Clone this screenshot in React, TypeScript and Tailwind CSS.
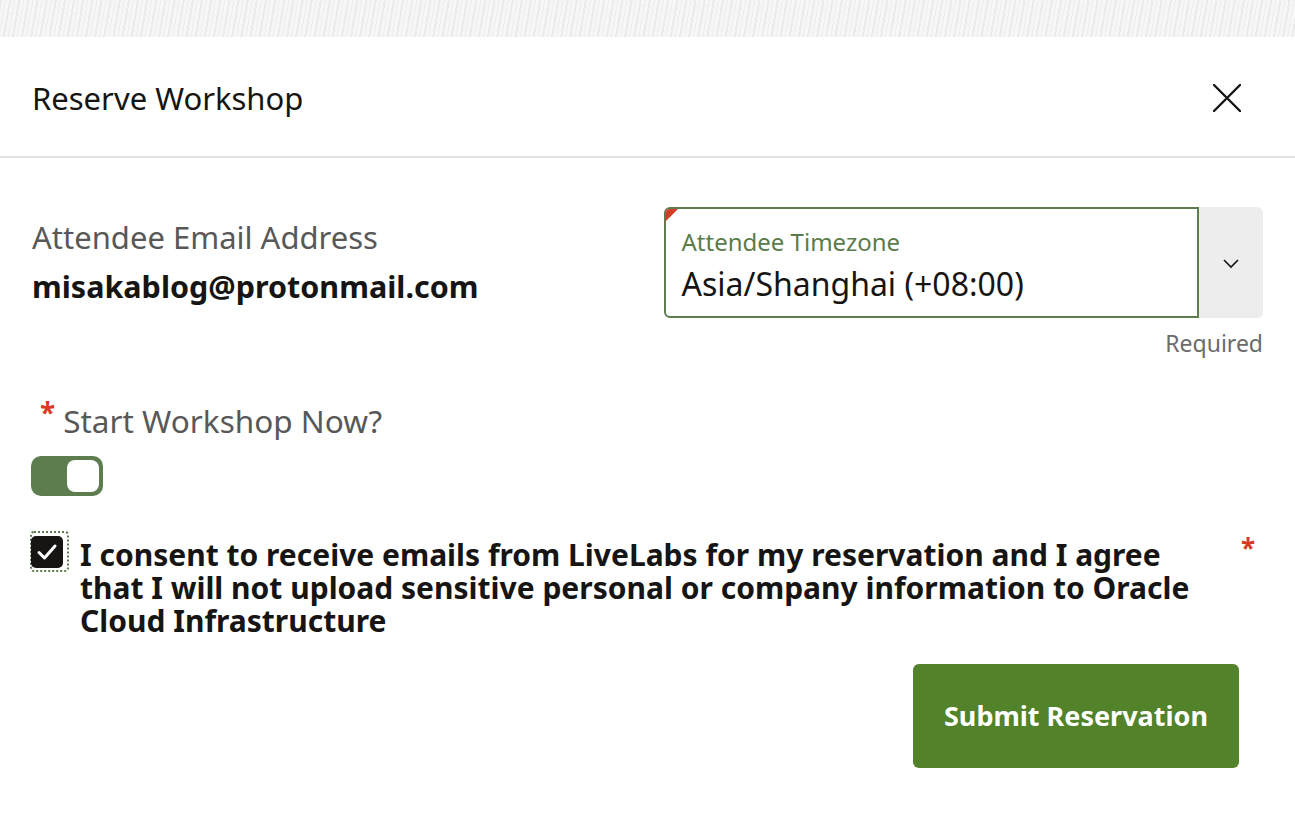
import { useState } from "react";

const ChevronDown = () => (
  <svg width="20" height="20" viewBox="0 0 20 20" fill="none">
    <path d="M3 7l7 7 7-7" stroke="#161513" strokeWidth="1.6" />
  </svg>
);

const CloseIcon = () => (
  <svg width="28" height="28" viewBox="0 0 28 28" fill="none">
    <path d="M1 1l26 26M27 1L1 27" stroke="#161513" strokeWidth="2.4" strokeLinecap="round" />
  </svg>
);

const CheckMark = () => (
  <svg width="22" height="22" viewBox="0 0 22 22" fill="none">
    <path d="M3 11.5l5.5 5.5L19 5" stroke="#fff" strokeWidth="3" strokeLinecap="round" strokeLinejoin="round" />
  </svg>
);

const App = () => {
  const [startNow, setStartNow] = useState(true);
  const [consent, setConsent] = useState(true);

  return (
    <div className="min-h-screen bg-white font-['Noto_Sans',sans-serif] text-[#161513]">
      <div className="h-[37px] bg-[#f5f5f5] bg-[repeating-linear-gradient(100deg,#ebebeb_0_2px,#f6f6f6_2px_5px,#ededed_5px_6px,#f7f7f7_6px_9px)]" />

      <div className="flex items-center justify-between h-[121px] px-8 border-b-2 border-[#e4e4e4]">
        <h1 className="text-[31px] leading-none pt-[3px]">Reserve Workshop</h1>
        <button className="mr-[22px] mt-[2px]">
          <CloseIcon />
        </button>
      </div>

      <div className="px-8 pt-[49px]">
        <div className="grid grid-cols-2 gap-8">
          <div className="pt-[10px]">
            <div className="text-[31px] leading-[40px] text-[#585858]">Attendee Email Address</div>
            <div className="mt-[9px] text-[30.5px] leading-[40px] font-bold">misakablog@protonmail.com</div>
          </div>

          <div>
            <div className="flex h-[111px]">
              <div className="relative flex-1 rounded-l-md border-2 border-[#5e7d4f] px-4 pt-[19px] overflow-hidden">
                <div className="absolute left-0 top-0 w-0 h-0 border-t-[12px] border-r-[12px] border-t-[#d63b25] border-r-transparent" />
                <div className="text-[24px] leading-[28px] text-[#5b7c4a]">Attendee Timezone</div>
                <div className="mt-[6px] text-[32px] leading-[44px]">Asia/Shanghai (+08:00)</div>
              </div>
              <div className="w-16 flex items-center justify-center rounded-r-md bg-[#ededed]">
                <ChevronDown />
              </div>
            </div>
            <div className="text-right text-[23px] leading-[28px] text-[#6b6b6b] mt-[11px]">Required</div>
          </div>
        </div>

        <div className="mt-[44px] flex items-start">
          <span className="text-[#d63b25] text-[28px] font-bold leading-none ml-[8px] mr-[8px] mt-[-3px]">*</span>
          <span className="text-[31.5px] leading-[40px] text-[#585858]">Start Workshop Now?</span>
        </div>

        <button
          onClick={() => setStartNow(!startNow)}
          className="mt-[15px] ml-[-1px] flex items-center justify-end w-[72px] h-[40px] rounded-[10px] bg-[#5e7d4f] px-[4px]"
        >
          {startNow && <span className="block w-[32px] h-[32px] rounded-[8px] bg-white" />}
        </button>

        <div className="mt-[40px] flex items-start">
          <button
            onClick={() => setConsent(!consent)}
            className="relative ml-[-1px] w-[32px] h-[32px] shrink-0"
          >
            <span className="absolute -left-[1px] -top-[5px] -right-[6px] -bottom-[4px] rounded-[4px] border-2 border-dotted border-[#5e7d4f]" />
            <span className="relative flex items-center justify-center w-[32px] h-[32px] rounded-[5px] bg-[#161513]">
              {consent && <CheckMark />}
            </span>
          </button>
          <div className="ml-[17px] mt-[2px] flex-1 text-[30px] leading-[33px] font-bold pr-[24px]">
            I consent to receive emails from LiveLabs for my reservation and I agree that I will not upload sensitive personal or company information to Oracle Cloud Infrastructure
          </div>
          <span className="text-[#d63b25] text-[26px] font-bold leading-none mr-[8px] mt-[-1px]">*</span>
        </div>

        <div className="mt-[27px] flex justify-end pr-[24px]">
          <button className="w-[326px] h-[104px] rounded-md bg-[#52822a] text-white text-[27px] font-bold">
            Submit Reservation
          </button>
        </div>
      </div>
    </div>
  );
};

export default App;
